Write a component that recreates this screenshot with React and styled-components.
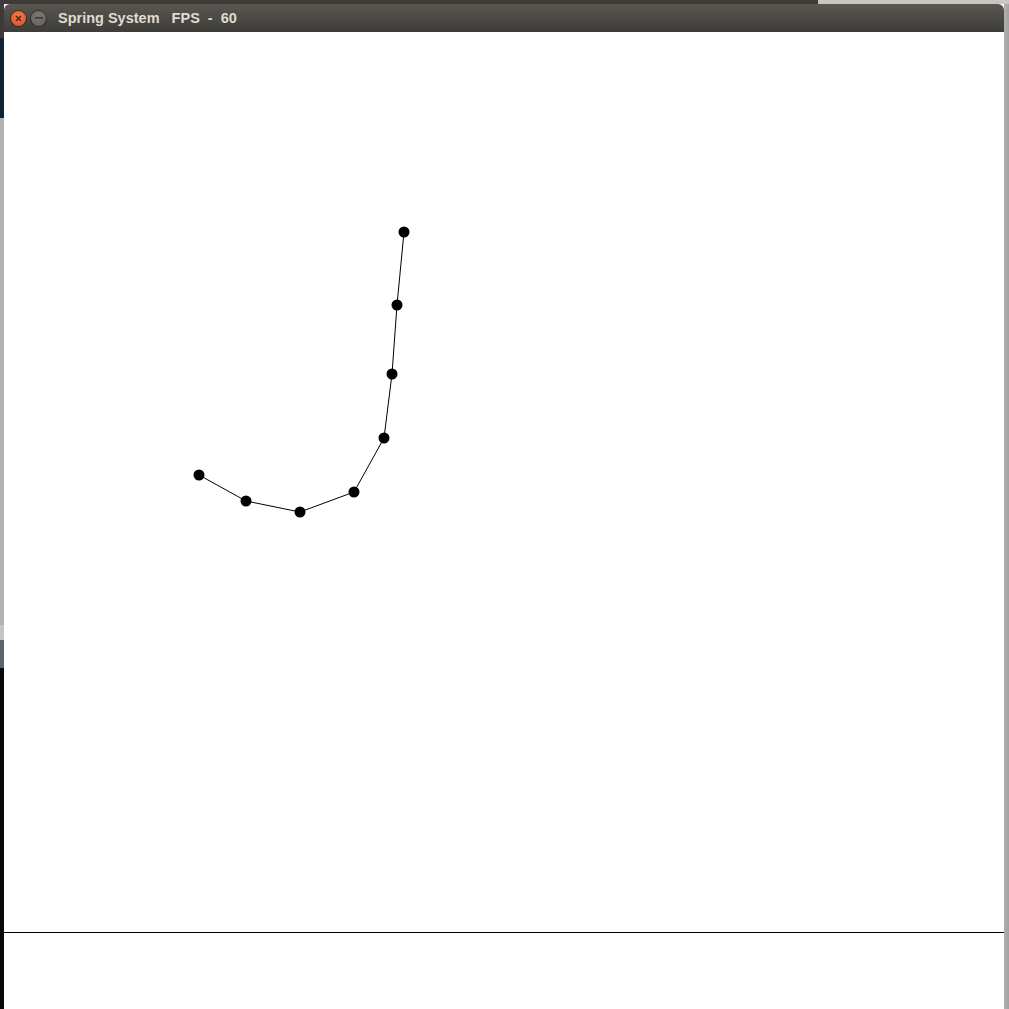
import React from "react";
import styled, { createGlobalStyle } from "styled-components";

const Global = createGlobalStyle`
  html, body {
    margin: 0;
    padding: 0;
    background: #000;
    overflow: hidden;
  }
`;

const Desktop = styled.div`
  display: grid;
  grid-template-columns: 4px 1000px 5px;
  grid-template-rows: 4px 1005px;
  width: 1009px;
  height: 1009px;
  background: #0a0a0a;
`;

const TopStrip = styled.div`
  grid-column: 1 / 4;
  display: grid;
  grid-template-columns: 818px 1fr;
  background: #3c3b37;
  div:last-child {
    background: #c9c6c1;
  }
`;

const LeftStrip = styled.div`
  display: flex;
  flex-direction: column;
`;

const Band = styled.div`
  height: ${({ h }) => h}px;
  flex: ${({ grow }) => (grow ? 1 : "none")};
  background: ${({ c }) => c};
`;

const RightStrip = styled.div`
  background: linear-gradient(90deg, #b0b0b0, #a2a2a2);
`;

const Window = styled.div`
  display: flex;
  flex-direction: column;
  background: #fff;
`;

const TitleBar = styled.div`
  display: flex;
  align-items: center;
  height: 28px;
  padding-left: 7px;
  border-radius: 6px 6px 0 0;
  background: linear-gradient(#5a5751, #3d3c38);
  font-family: "Liberation Sans", Arial, sans-serif;
  font-weight: bold;
  font-size: 14.5px;
  color: #dfdbd2;
  white-space: pre;
`;

const Circle = styled.span`
  display: flex;
  align-items: center;
  justify-content: center;
  width: 15px;
  height: 15px;
  margin-right: 5px;
  border-radius: 50%;
  background: ${({ close }) =>
    close
      ? "radial-gradient(circle at 50% 35%, #f47a4f, #df4a1f)"
      : "radial-gradient(circle at 50% 35%, #7c7a75, #5e5d59)"};
  box-shadow: 0 0 0 1px rgba(0, 0, 0, 0.35);
`;

const Title = styled.span`
  margin-left: 7px;
`;

const Canvas = styled.svg`
  display: block;
  flex: 1;
  width: 1000px;
`;

const nodes = [
  [404, 232],
  [397, 305],
  [392, 374],
  [384, 438],
  [354, 492],
  [300, 512],
  [246, 501],
  [199, 475],
].map(([x, y]) => [x - 4, y - 32]);

export default function App() {
  return (
    <>
      <Global />
      <Desktop>
        <TopStrip>
          <div />
          <div />
        </TopStrip>
        <LeftStrip>
          <Band h={34} c="#3c3b37" />
          <Band h={80} c="#112233" />
          <Band h={507} c="#b3b3b3" />
          <Band h={15} c="#c4c4c4" />
          <Band h={28} c="#5b636b" />
          <Band grow c="#090909" />
        </LeftStrip>
        <Window>
          <TitleBar>
            <Circle close>
              <svg width="7" height="7" viewBox="0 0 7 7">
                <path d="M1 1L6 6M6 1L1 6" stroke="#4a2012" strokeWidth="1.4" />
              </svg>
            </Circle>
            <Circle>
              <svg width="8" height="2" viewBox="0 0 8 2">
                <rect width="8" height="1.6" fill="#3a3935" />
              </svg>
            </Circle>
            <Title>Spring System   FPS  -  60</Title>
          </TitleBar>
          <Canvas viewBox="0 0 1000 977">
            <line x1="0" y1="900.5" x2="1000" y2="900.5" stroke="#000" strokeWidth="1" />
            <polyline
              points={nodes.map((p) => p.join(",")).join(" ")}
              fill="none"
              stroke="#000"
              strokeWidth="1"
            />
            {nodes.map(([x, y], i) => (
              <circle key={i} cx={x} cy={y} r="5.5" fill="#000" />
            ))}
          </Canvas>
        </Window>
        <RightStrip />
      </Desktop>
    </>
  );
}
